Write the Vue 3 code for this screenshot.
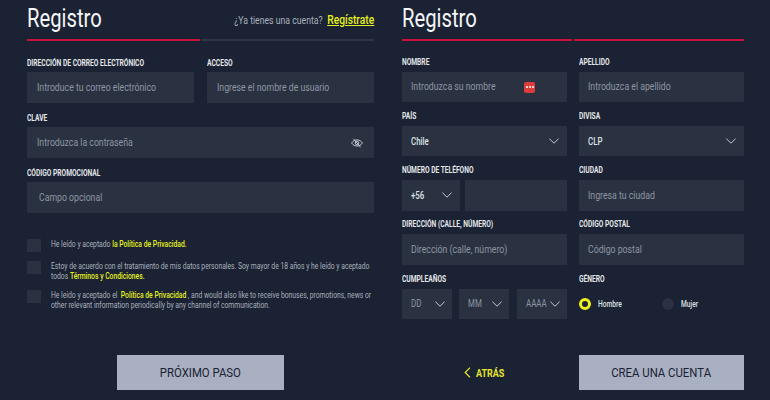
<template>
  <div class="page">
    <section class="panel left">
      <header class="head">
        <h1>Registro</h1>
        <p class="have">¿Ya tienes una cuenta? <a>Regístrate</a></p>
      </header>
      <div class="steps">
        <span class="step on"></span>
        <span class="step"></span>
      </div>
      <div class="grid first">
        <div class="field">
          <label>DIRECCIÓN DE CORREO ELECTRÓNICO</label>
          <div class="box"><span>Introduce tu correo electrónico</span></div>
        </div>
        <div class="field">
          <label>ACCESO</label>
          <div class="box"><span>Ingrese el nombre de usuario</span></div>
        </div>
        <div class="field wide">
          <label>CLAVE</label>
          <div class="box">
            <span>Introduzca la contraseña</span>
            <svg class="eye" width="12" height="10" viewBox="0 0 12 10" fill="none" stroke="#c3c8d0" stroke-width="1">
              <path d="M.6 5C2 2.9 3.8 1.9 6 1.9S10 2.9 11.4 5C10 7.100 8.200 8.100 6 8.100S2 7.100.6 5Z" />
              <circle cx="6" cy="5" r="1.800" />
              <path d="M2.500.8 9.500 9.200" />
            </svg>
          </div>
        </div>
        <div class="field wide">
          <label>CÓDIGO PROMOCIONAL</label>
          <div class="box promo"><span>Campo opcional</span></div>
        </div>
      </div>
      <ul class="checks">
        <li>
          <span class="check"></span>
          <p>He leído y aceptado <b>la Política de Privacidad.</b></p>
        </li>
        <li>
          <span class="check"></span>
          <p>Estoy de acuerdo con el tratamiento de mis datos personales. Soy mayor de 18 años y he leído y aceptado todos <b>Términos y Condiciones.</b></p>
        </li>
        <li>
          <span class="check"></span>
          <p>He leído y aceptado el &nbsp;<b>Política de Privacidad</b> , and would also like to receive bonuses, promotions, news or other relevant information periodically by any channel of communication.</p>
        </li>
      </ul>
      <div class="actions center">
        <button class="btn"><span>PRÓXIMO PASO</span></button>
      </div>
    </section>

    <section class="panel right">
      <header class="head">
        <h1>Registro</h1>
      </header>
      <div class="steps gap">
        <span class="step on"></span>
        <span class="step on"></span>
      </div>
      <div class="grid second">
        <div class="field">
          <label>NOMBRE</label>
          <div class="box">
            <span>Introduzca su nombre</span>
            <em class="dots"><i></i><i></i><i></i></em>
          </div>
        </div>
        <div class="field">
          <label>APELLIDO</label>
          <div class="box"><span>Introduzca el apellido</span></div>
        </div>
        <div class="field">
          <label>PAÍS</label>
          <div class="box value"><span>Chile</span><svg class="chev" viewBox="0 0 10 6"><path d="M.4.7 5 5.200 9.600.7" /></svg></div>
        </div>
        <div class="field">
          <label>DIVISA</label>
          <div class="box value"><span>CLP</span><svg class="chev" viewBox="0 0 10 6"><path d="M.4.7 5 5.200 9.600.7" /></svg></div>
        </div>
        <div class="field">
          <label>NÚMERO DE TELÉFONO</label>
          <div class="phone">
            <div class="box value code"><span>+56</span><svg class="chev" viewBox="0 0 10 6"><path d="M.4.7 5 5.200 9.600.7" /></svg></div>
            <div class="box grow"></div>
          </div>
        </div>
        <div class="field">
          <label>CIUDAD</label>
          <div class="box"><span>Ingresa tu ciudad</span></div>
        </div>
        <div class="field">
          <label>DIRECCIÓN (CALLE, NÚMERO)</label>
          <div class="box"><span>Dirección (calle, número)</span></div>
        </div>
        <div class="field">
          <label>CÓDIGO POSTAL</label>
          <div class="box"><span>Código postal</span></div>
        </div>
        <div class="field">
          <label>CUMPLEAÑOS</label>
          <div class="birth">
            <div class="box" v-for="part in dateParts" :key="part">
              <span>{{ part }}</span><svg class="chev" viewBox="0 0 10 6"><path d="M.4.7 5 5.200 9.600.7" /></svg>
            </div>
          </div>
        </div>
        <div class="field">
          <label>GÉNERO</label>
          <div class="gender">
            <div class="opt"><span class="radio sel"></span><span class="name">Hombre</span></div>
            <div class="opt"><span class="radio"></span><span class="name">Mujer</span></div>
          </div>
        </div>
      </div>
      <div class="actions split">
        <a class="back">
          <svg width="7" height="11" viewBox="0 0 7 11" fill="none" stroke="#e6e62a" stroke-width="1.300"><path d="M6 .6 1.200 5.500 6 10.400" /></svg>
          <span>ATRÁS</span>
        </a>
        <button class="btn"><span>CREA UNA CUENTA</span></button>
      </div>
    </section>
  </div>
</template>

<script setup>
const dateParts = ["DD", "MM", "AAAA"];
</script>

<style>
body {
  background: #1a2233;
}
</style>

<style scoped>
.page {
  display: flex;
  gap: 28px;
  width: 770px;
  height: 400px;
  padding: 0 26px 0 27px;
  box-sizing: border-box;
  overflow: hidden;
  background: #1a2233;
  color: #fff;
  font-family: Roboto, sans-serif;
}

.panel {
  display: flex;
  flex-direction: column;
  height: 400px;
}

.left {
  width: 347px;
}

.right {
  width: 342px;
}

.head {
  display: flex;
  align-items: flex-end;
  justify-content: space-between;
  height: 39px;
}

h1 {
  margin: 0 0 6px;
  font-size: 25px;
  font-weight: 400;
  line-height: 28px;
  color: #f5f6f8;
  transform: scaleX(0.81);
  transform-origin: left;
}

.have {
  margin: 0 0 10px;
  font-size: 11px;
  line-height: 16px;
  white-space: nowrap;
  color: #a9b0bd;
  transform: scaleX(0.79);
  transform-origin: right;
}

.have a {
  margin-left: 3px;
  font-size: 13px;
  font-weight: 500;
  color: #e6f01e;
  text-decoration: underline;
}

.steps {
  display: flex;
  gap: 1px;
  height: 2px;
}

.steps.gap {
  gap: 2px;
}

.step {
  flex: 1;
  background: #2e3646;
}

.step.on {
  background: #c8123c;
}

.grid {
  display: grid;
  grid-template-columns: 1fr 1fr;
  column-gap: 12.600px;
  row-gap: 9px;
  margin-top: 16px;
}

.second {
  row-gap: 8.800px;
  margin-top: 15.500px;
}

.second label {
  line-height: 10px;
}

.field {
  display: flex;
  flex-direction: column;
  min-width: 0;
}

.wide {
  grid-column: 1 / 3;
}

label {
  height: 15px;
  font-size: 9px;
  font-weight: 700;
  line-height: 12px;
  white-space: nowrap;
  color: #e4e6ea;
  transform: scaleX(0.74);
  transform-origin: left;
}

.box {
  display: flex;
  align-items: center;
  position: relative;
  height: 31px;
  padding: 0 8px 0 10px;
  box-sizing: border-box;
  background: #2a3241;
  font-size: 10.500px;
  color: #8d94a2;
}

.box > span {
  flex: 1;
  min-width: 0;
  white-space: nowrap;
  transform: scaleX(0.83);
  transform-origin: left;
}

.second .box {
  height: 30.500px;
  padding-left: 9px;
}

.promo {
  padding-left: 12px;
}

.eye {
  flex: none;
  margin-right: 3px;
}

.value {
  font-weight: 500;
  color: #dfe2e7;
}

.box.value > span,
.birth .box > span {
  transform: scaleX(0.75);
}

.chev {
  flex: none;
  width: 10px;
  height: 6px;
  fill: none;
  stroke: #c3c8d0;
  stroke-width: 1;
}

.dots {
  display: flex;
  align-items: center;
  justify-content: center;
  gap: 1px;
  position: absolute;
  left: 122px;
  top: 10px;
  width: 11px;
  height: 11px;
  border-radius: 2px;
  background: #dc3c3c;
}

.dots i {
  width: 2px;
  height: 2px;
  border-radius: 50%;
  background: #fff;
}

.phone {
  display: flex;
  gap: 5px;
}

.code {
  width: 58px;
  flex: none;
}

.grow {
  flex: 1;
}

.birth {
  display: flex;
  gap: 7.500px;
}

.birth .box {
  flex: 1;
  min-width: 0;
  padding-right: 7px;
}

.gender {
  display: flex;
  height: 30.500px;
  align-items: center;
}

.opt {
  display: flex;
  align-items: center;
  gap: 7px;
  width: 85px;
  font-size: 8.500px;
  font-weight: 500;
  color: #dfe2e7;
}

.name {
  transform: scaleX(0.78);
  transform-origin: left;
}

.radio {
  flex: none;
  width: 12px;
  height: 12px;
  border-radius: 50%;
  box-sizing: border-box;
  background: #2a3241;
}

.radio.sel {
  border: 3px solid #eef01e;
  background: #1a2233;
}

.checks {
  display: flex;
  flex-direction: column;
  gap: 9px;
  margin: 26px 0 0;
  padding: 0;
  list-style: none;
}

.checks li {
  display: flex;
  gap: 10px;
}

.check {
  flex: none;
  width: 14px;
  height: 13px;
  background: #2a3241;
}

.checks p {
  flex: none;
  width: 405px;
  margin: 0;
  padding-top: 1px;
  font-size: 8.500px;
  line-height: 9.500px;
  color: #aab0bc;
  transform: scaleX(0.797);
  transform-origin: left;
}

.checks b {
  font-weight: 500;
  color: #e6f01e;
}

.actions {
  display: flex;
  align-items: center;
  margin-top: auto;
  padding-bottom: 10px;
}

.center {
  justify-content: center;
}

.split {
  justify-content: space-between;
}

.btn {
  width: 167px;
  height: 35px;
  padding: 0;
  border: 0;
  background: #a8b0c1;
  font-family: Roboto, sans-serif;
  font-size: 13px;
  color: #1a2233;
}

.btn span {
  display: inline-block;
  white-space: nowrap;
  transform: scaleX(0.875);
}

.right .btn {
  width: 165px;
}

.back {
  display: flex;
  align-items: center;
  gap: 5px;
  margin-left: 62px;
  width: 50px;
  font-size: 11.500px;
  font-weight: 700;
  color: #e6e62a;
}

.back span {
  transform: scaleX(0.78);
  transform-origin: left;
}
</style>
